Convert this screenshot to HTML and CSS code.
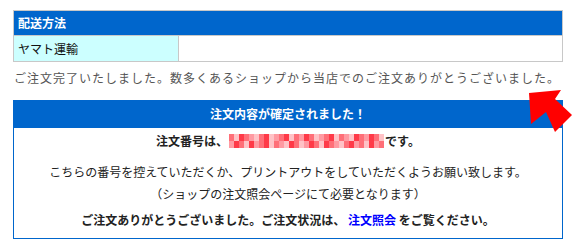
FILE: index.html
```html
<!DOCTYPE html>
<html lang="ja">
<head>
<meta charset="utf-8">
<link rel="stylesheet" href="styles.css">
</head>
<body>
<div class="page">
  <table class="ship">
    <tr><th colspan="2">配送方法</th></tr>
    <tr><td class="label">ヤマト運輸</td><td class="value"></td></tr>
  </table>
  <p class="thanks">ご注文完了いたしました。数多くあるショップから当店でのご注文ありがとうございました。</p>
  <div class="box">
    <div class="box-head">注文内容が確定されました！</div>
    <div class="box-body">
      <p class="num">注文番号は、<span class="mosaic"><i class="a"></i><i class="b"></i><i class="c"></i><i class="a"></i><i class="d"></i><i class="b"></i><i class="a"></i><i class="c"></i><i class="b"></i><i class="d"></i><i class="a"></i><i class="c"></i><i class="b"></i><i class="a"></i><i class="d"></i><i class="c"></i><i class="a"></i><i class="b"></i><i class="d"></i><i class="a"></i><i class="c"></i><i class="b"></i><i class="a"></i><i class="d"></i><i class="b"></i><i class="c"></i><i class="a"></i><i class="d"></i><i class="c"></i><i class="a"></i><i class="b"></i><i class="d"></i><i class="c"></i><i class="a"></i><i class="b"></i><i class="c"></i><i class="d"></i><i class="a"></i><i class="c"></i><i class="b"></i><i class="a"></i><i class="d"></i><i class="b"></i><i class="c"></i><i class="a"></i><i class="b"></i><i class="d"></i><i class="c"></i><i class="a"></i><i class="b"></i><i class="c"></i><i class="a"></i><i class="d"></i><i class="b"></i><i class="a"></i><i class="c"></i><i class="d"></i><i class="a"></i><i class="b"></i><i class="c"></i><i class="d"></i><i class="a"></i></span>です。</p>
      <p class="note">こちらの番号を控えていただくか、プリントアウトをしていただくようお願い致します。</p>
      <p class="note2">（ショップの注文照会ページにて必要となります）</p>
      <p class="final">ご注文ありがとうございました。ご注文状況は、 <a href="#">注文照会</a> をご覧ください。</p>
    </div>
  </div>
  <svg class="arrow" width="52" height="48" viewBox="0 0 52 48">
    <polygon points="1,5 33,2 27,11 44,27 27,44 18,24 3,36" fill="#ff0000"/>
  </svg>
</div>
</body>
</html>
```
FILE: styles.css
```css
html, body { margin: 0; padding: 0; background: #fff; }
body {
  font-family: "Noto Sans CJK JP", "Noto Sans", sans-serif;
  font-size: 12px;
  color: #222;
}
.page {
  position: relative;
  width: 580px;
  height: 248px;
  padding: 10px 0 0 13px;
  box-sizing: border-box;
  overflow: hidden;
}
.ship {
  width: 550px;
  border-collapse: collapse;
  border: 1px solid #c8c8c8;
}
.ship th {
  background: #0066cc;
  color: #fff;
  text-align: left;
  font-weight: bold;
  height: 24px;
  padding: 0 4px;
  font-size: 12px;
  line-height: 24px;
}
.ship td {
  height: 25px;
  padding: 0 4px;
  border-top: 1px solid #c8c8c8;
  line-height: 25px;
  color: #111;
}
.ship .label {
  width: 156px;
  background: #ccffff;
  border-right: 1px solid #c8c8c8;
}
.thanks {
  margin: 6px 0 0 1px;
  font-size: 12px;
  line-height: 20px;
  letter-spacing: 1px;
  color: #555;
}
.box {
  margin-top: 12px;
  width: 550px;
  border: 1px solid #0066cc;
  box-sizing: border-box;
}
.box-head {
  background: #0066cc;
  color: #fff;
  font-weight: bold;
  text-align: center;
  height: 27px;
  line-height: 26px;
  font-size: 12px;
}
.box-body {
  text-align: center;
  padding: 2px 0 8px;
}
.box-body p { margin: 0; line-height: 20px; }
.num {
  font-weight: bold;
  display: flex;
  justify-content: center;
  align-items: center;
  height: 22px;
}
.mosaic {
  display: inline-grid;
  grid-template-columns: repeat(31, 5px);
  grid-auto-rows: 7px;
  width: 155px;
  margin: 0 1px;
}
.mosaic i { display: block; }
.mosaic .a { background: #ff6f78; }
.mosaic .b { background: #ffc2c6; }
.mosaic .c { background: #ff3a48; }
.mosaic .d { background: #ff9aa2; }
.note { margin-top: 10px !important; }
.note2 { margin-top: 2px !important; }
.final { margin-top: 6px !important; font-weight: bold; }
.final a { color: #0000ff; text-decoration: none; }
.arrow {
  position: absolute;
  left: 528px;
  top: 88px;
}
```
